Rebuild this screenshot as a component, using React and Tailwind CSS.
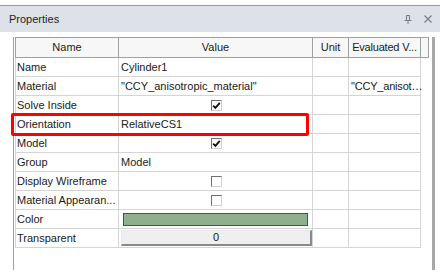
import React from "react";

function Check({ checked }) {
  return (
    <div className="w-[11px] h-[11px] border-t border-l border-[#6f6f6f] border-r border-b border-r-[#d0d0d0] border-b-[#d0d0d0] bg-white flex items-center justify-center">
      {checked && (
        <svg width="9" height="9" viewBox="0 0 9 9">
          <path d="M1.2 4.6 L3.4 6.9 L7.8 1.8" fill="none" stroke="#111" strokeWidth="1.8" />
        </svg>
      )}
    </div>
  );
}

const rows = [
  { n: "Name", v: "Cylinder1" },
  { n: "Material", v: '"CCY_anisotropic_material"', e: '"CCY_anisot…' },
  { n: "Solve Inside", type: "check", checked: true },
  { n: "Orientation", v: "RelativeCS1" },
  { n: "Model", type: "check", checked: true },
  { n: "Group", v: "Model" },
  { n: "Display Wireframe", type: "check", checked: false },
  { n: "Material Appearan...", type: "check", checked: false },
  { n: "Color", type: "color" },
  { n: "Transparent", type: "button" },
];

export default function App() {
  return (
    <div
      className="relative w-[440px] h-[275px] bg-white text-[11px] text-[#1a1a1a] overflow-hidden"
      style={{ fontFamily: '"Liberation Sans", Arial, sans-serif' }}
    >
      <div className="h-[5px]" />
      <div className="h-px bg-[#9a9a9a]" />
      <div className="h-[26px] bg-[#dde2e8] flex items-center pl-[9px] pr-[8px]">
        <span className="text-[11px] text-[#1e1e1e]">Properties</span>
        <div className="ml-auto flex items-center gap-[12px]">
          <svg width="8" height="9" viewBox="0 0 8 9">
            <path d="M2.5 0.5 H5.5 V5 M2.5 0.5 V5 M0.5 5.5 H7.5 M4 5.5 V9" fill="none" stroke="#7a7a7a" strokeWidth="1" />
          </svg>
          <svg width="8" height="8" viewBox="0 0 8 8">
            <path d="M0.5 0.5 L7.5 7.5 M7.5 0.5 L0.5 7.5" fill="none" stroke="#7a7a7a" strokeWidth="1.1" />
          </svg>
        </div>
      </div>
      <div className="h-[5px]" />
      <div className="ml-[13px] w-[422px] h-[233px] border-l border-[#a0a0a0] border-r-[3px] border-r-[#a8a8a8] pl-px">
        <div className="grid grid-cols-[104px_194px_36px_72px_8px] h-[21px]">
          <div className="border border-[#a0a0a0] bg-[#f7f7f7] flex items-center justify-center">Name</div>
          <div className="border-y border-r border-[#a0a0a0] bg-[#f7f7f7] flex items-center justify-center">Value</div>
          <div className="border-y border-r border-[#a0a0a0] bg-[#f7f7f7] flex items-center justify-center">Unit</div>
          <div className="border-y border-r border-[#a0a0a0] bg-[#f7f7f7] flex items-center justify-center whitespace-nowrap tracking-[-0.2px]">Evaluated V...</div>
          <div className="border-y border-r border-[#a0a0a0] bg-[#f7f7f7]" />
        </div>
        {rows.map((r) => (
          <div key={r.n} className="grid grid-cols-[104px_194px_36px_72px] h-[19px]">
            <div className="border-l border-r border-b border-[#d4d4d4] pl-[1px] flex items-center whitespace-nowrap">
              {r.n}
            </div>
            <div className="border-r border-b border-[#d4d4d4] flex items-center whitespace-nowrap">
              {r.v && <span className="pl-[2px]">{r.v}</span>}
              {r.type === "check" && (
                <div className="w-full flex justify-center pl-[1px]">
                  <Check checked={r.checked} />
                </div>
              )}
              {r.type === "color" && (
                <div className="ml-[4px] w-[185px] h-[13px] border border-[#4f4f4f] bg-[#8fb08d]" />
              )}
              {r.type === "button" && (
                <div className="ml-[2px] w-[191px] h-[16px] bg-[#efefef] border-t border-l border-[#e8e8e8] border-r-2 border-b-2 border-r-[#8a8a8a] border-b-[#8a8a8a] flex items-center justify-center">
                  0
                </div>
              )}
            </div>
            <div className="border-r border-b border-[#d4d4d4]" />
            <div className="border-r border-b border-[#d4d4d4] flex items-center pl-[2px] whitespace-nowrap tracking-[-0.2px]">
              {r.e}
            </div>
          </div>
        ))}
      </div>
      <div className="absolute left-[11px] top-[113px] w-[298px] h-[23px] border-[3px] border-[#ff0000] rounded-[2px]" />
    </div>
  );
}
